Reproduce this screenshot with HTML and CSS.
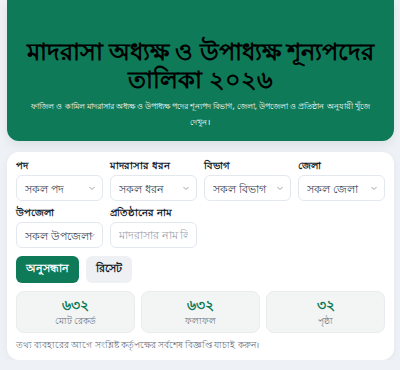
FILE: index.html
```html
<!DOCTYPE html>
<html lang="bn">
<head>
    <meta charset="UTF-8">
    <meta name="viewport" content="width=device-width, initial-scale=1.0">
    <title>মাদরাসা শূন্যপদ</title>
    <link rel="stylesheet" href="styles.css">
</head>
<body>
    <div class="page">
        <header class="hero">
            <h1>মাদরাসা অধ্যক্ষ ও উপাধ্যক্ষ শূন্যপদের তালিকা ২০২৬</h1>
            <p>ফাজিল ও কামিল মাদরাসার অধ্যক্ষ ও উপাধ্যক্ষ পদের শূন্যপদ বিভাগ, জেলা, উপজেলা ও প্রতিষ্ঠান অনুযায়ী খুঁজে দেখুন।</p>
        </header>

        <section class="panel">
            <div class="filters">
                <div class="field">
                    <label>পদ</label>
                    <select><option>সকল পদ</option></select>
                </div>
                <div class="field">
                    <label>মাদরাসার ধরন</label>
                    <select><option>সকল ধরন</option></select>
                </div>
                <div class="field">
                    <label>বিভাগ</label>
                    <select><option>সকল বিভাগ</option></select>
                </div>
                <div class="field">
                    <label>জেলা</label>
                    <select><option>সকল জেলা</option></select>
                </div>
                <div class="field">
                    <label>উপজেলা</label>
                    <select><option>সকল উপজেলা</option></select>
                </div>
                <div class="field">
                    <label>প্রতিষ্ঠানের নাম</label>
                    <input type="text" placeholder="মাদরাসার নাম লিখুন">
                </div>
            </div>

            <div class="actions">
                <button class="btn primary">অনুসন্ধান</button>
                <button class="btn">রিসেট</button>
            </div>

            <div class="stats">
                <div class="stat">
                    <div class="num">৬৩২</div>
                    <div class="lbl">মোট রেকর্ড</div>
                </div>
                <div class="stat">
                    <div class="num">৬৩২</div>
                    <div class="lbl">ফলাফল</div>
                </div>
                <div class="stat">
                    <div class="num">৩২</div>
                    <div class="lbl">পৃষ্ঠা</div>
                </div>
            </div>

            <p class="note">তথ্য ব্যবহারের আগে সংশ্লিষ্ট কর্তৃপক্ষের সর্বশেষ বিজ্ঞপ্তি যাচাই করুন।</p>
        </section>
    </div>
</body>
</html>
```

FILE: styles.css
```css
body {
    margin: 0;
    background: #eef2f6;
    font-family: "Noto Sans", "DejaVu Sans", sans-serif;
    color: #1f2937;
}

.page {
    padding: 0 6px 0 7px;
}

.hero {
    background: #0e7a58;
    border-radius: 0 0 12px 12px;
    padding: 37px 0 11px;
    text-align: center;
    box-shadow: 0 4px 10px rgba(15, 23, 42, 0.08);
}

.hero h1 {
    margin: 0 0 5px;
    font-size: 24px;
    line-height: 28px;
    font-weight: 800;
    color: #000000;
}

.hero p {
    max-width: 350px;
    margin: 0 auto;
    font-size: 8.2px;
    line-height: 16px;
    color: #ffffff;
}

.panel {
    margin-top: 11px;
    background: #ffffff;
    border-radius: 12px;
    padding: 6px 9px 8px;
    box-shadow: 0 2px 8px rgba(15, 23, 42, 0.05);
}

.filters {
    display: grid;
    grid-template-columns: repeat(4, 1fr);
    column-gap: 7px;
    row-gap: 4px;
}

.field label {
    display: block;
    font-size: 10px;
    font-weight: 700;
    color: #111827;
    margin-bottom: 3px;
    line-height: 14px;
}

.field select,
.field input {
    width: 100%;
    box-sizing: border-box;
    height: 26px;
    border: 1px solid #e3e7ee;
    border-radius: 6px;
    background: #ffffff;
    font-family: inherit;
    font-size: 11px;
    color: #374151;
    padding: 0 8px;
    outline: none;
}

.field select {
    -webkit-appearance: none;
    appearance: none;
    background-image: url("data:image/svg+xml,%3Csvg xmlns='http://www.w3.org/2000/svg' width='8' height='8' viewBox='0 0 8 8'%3E%3Cpath d='M1.5 3l2.5 2.5L6.5 3' fill='none' stroke='%239ca3af' stroke-width='1'/%3E%3C/svg%3E");
    background-repeat: no-repeat;
    background-position: right 6px center;
}

.field input {
    font-size: 10.5px;
}

.field input::placeholder {
    color: #9ca3af;
}

.actions {
    display: flex;
    gap: 7px;
    margin-top: 8px;
}

.btn {
    height: 27px;
    padding: 0 10px;
    border: none;
    border-radius: 6px;
    background: #eef0f4;
    color: #111827;
    font-family: inherit;
    font-size: 11px;
    font-weight: 700;
}

.btn.primary {
    background: #0e7a58;
    color: #ffffff;
}

.stats {
    display: grid;
    grid-template-columns: repeat(3, 1fr);
    gap: 6px;
    margin-top: 8px;
}

.stat {
    background: #f2f5f4;
    border: 1px solid #e8ecec;
    border-radius: 8px;
    height: 42px;
    text-align: center;
    padding-top: 4px;
    box-sizing: border-box;
}

.stat .num {
    font-size: 14px;
    font-weight: 700;
    color: #0e7a58;
    line-height: 18px;
}

.stat .lbl {
    font-size: 9px;
    color: #6b7280;
    line-height: 14px;
}

.note {
    margin: 5px 0 0;
    font-size: 8.5px;
    color: #6b7280;
    line-height: 14px;
}
```
